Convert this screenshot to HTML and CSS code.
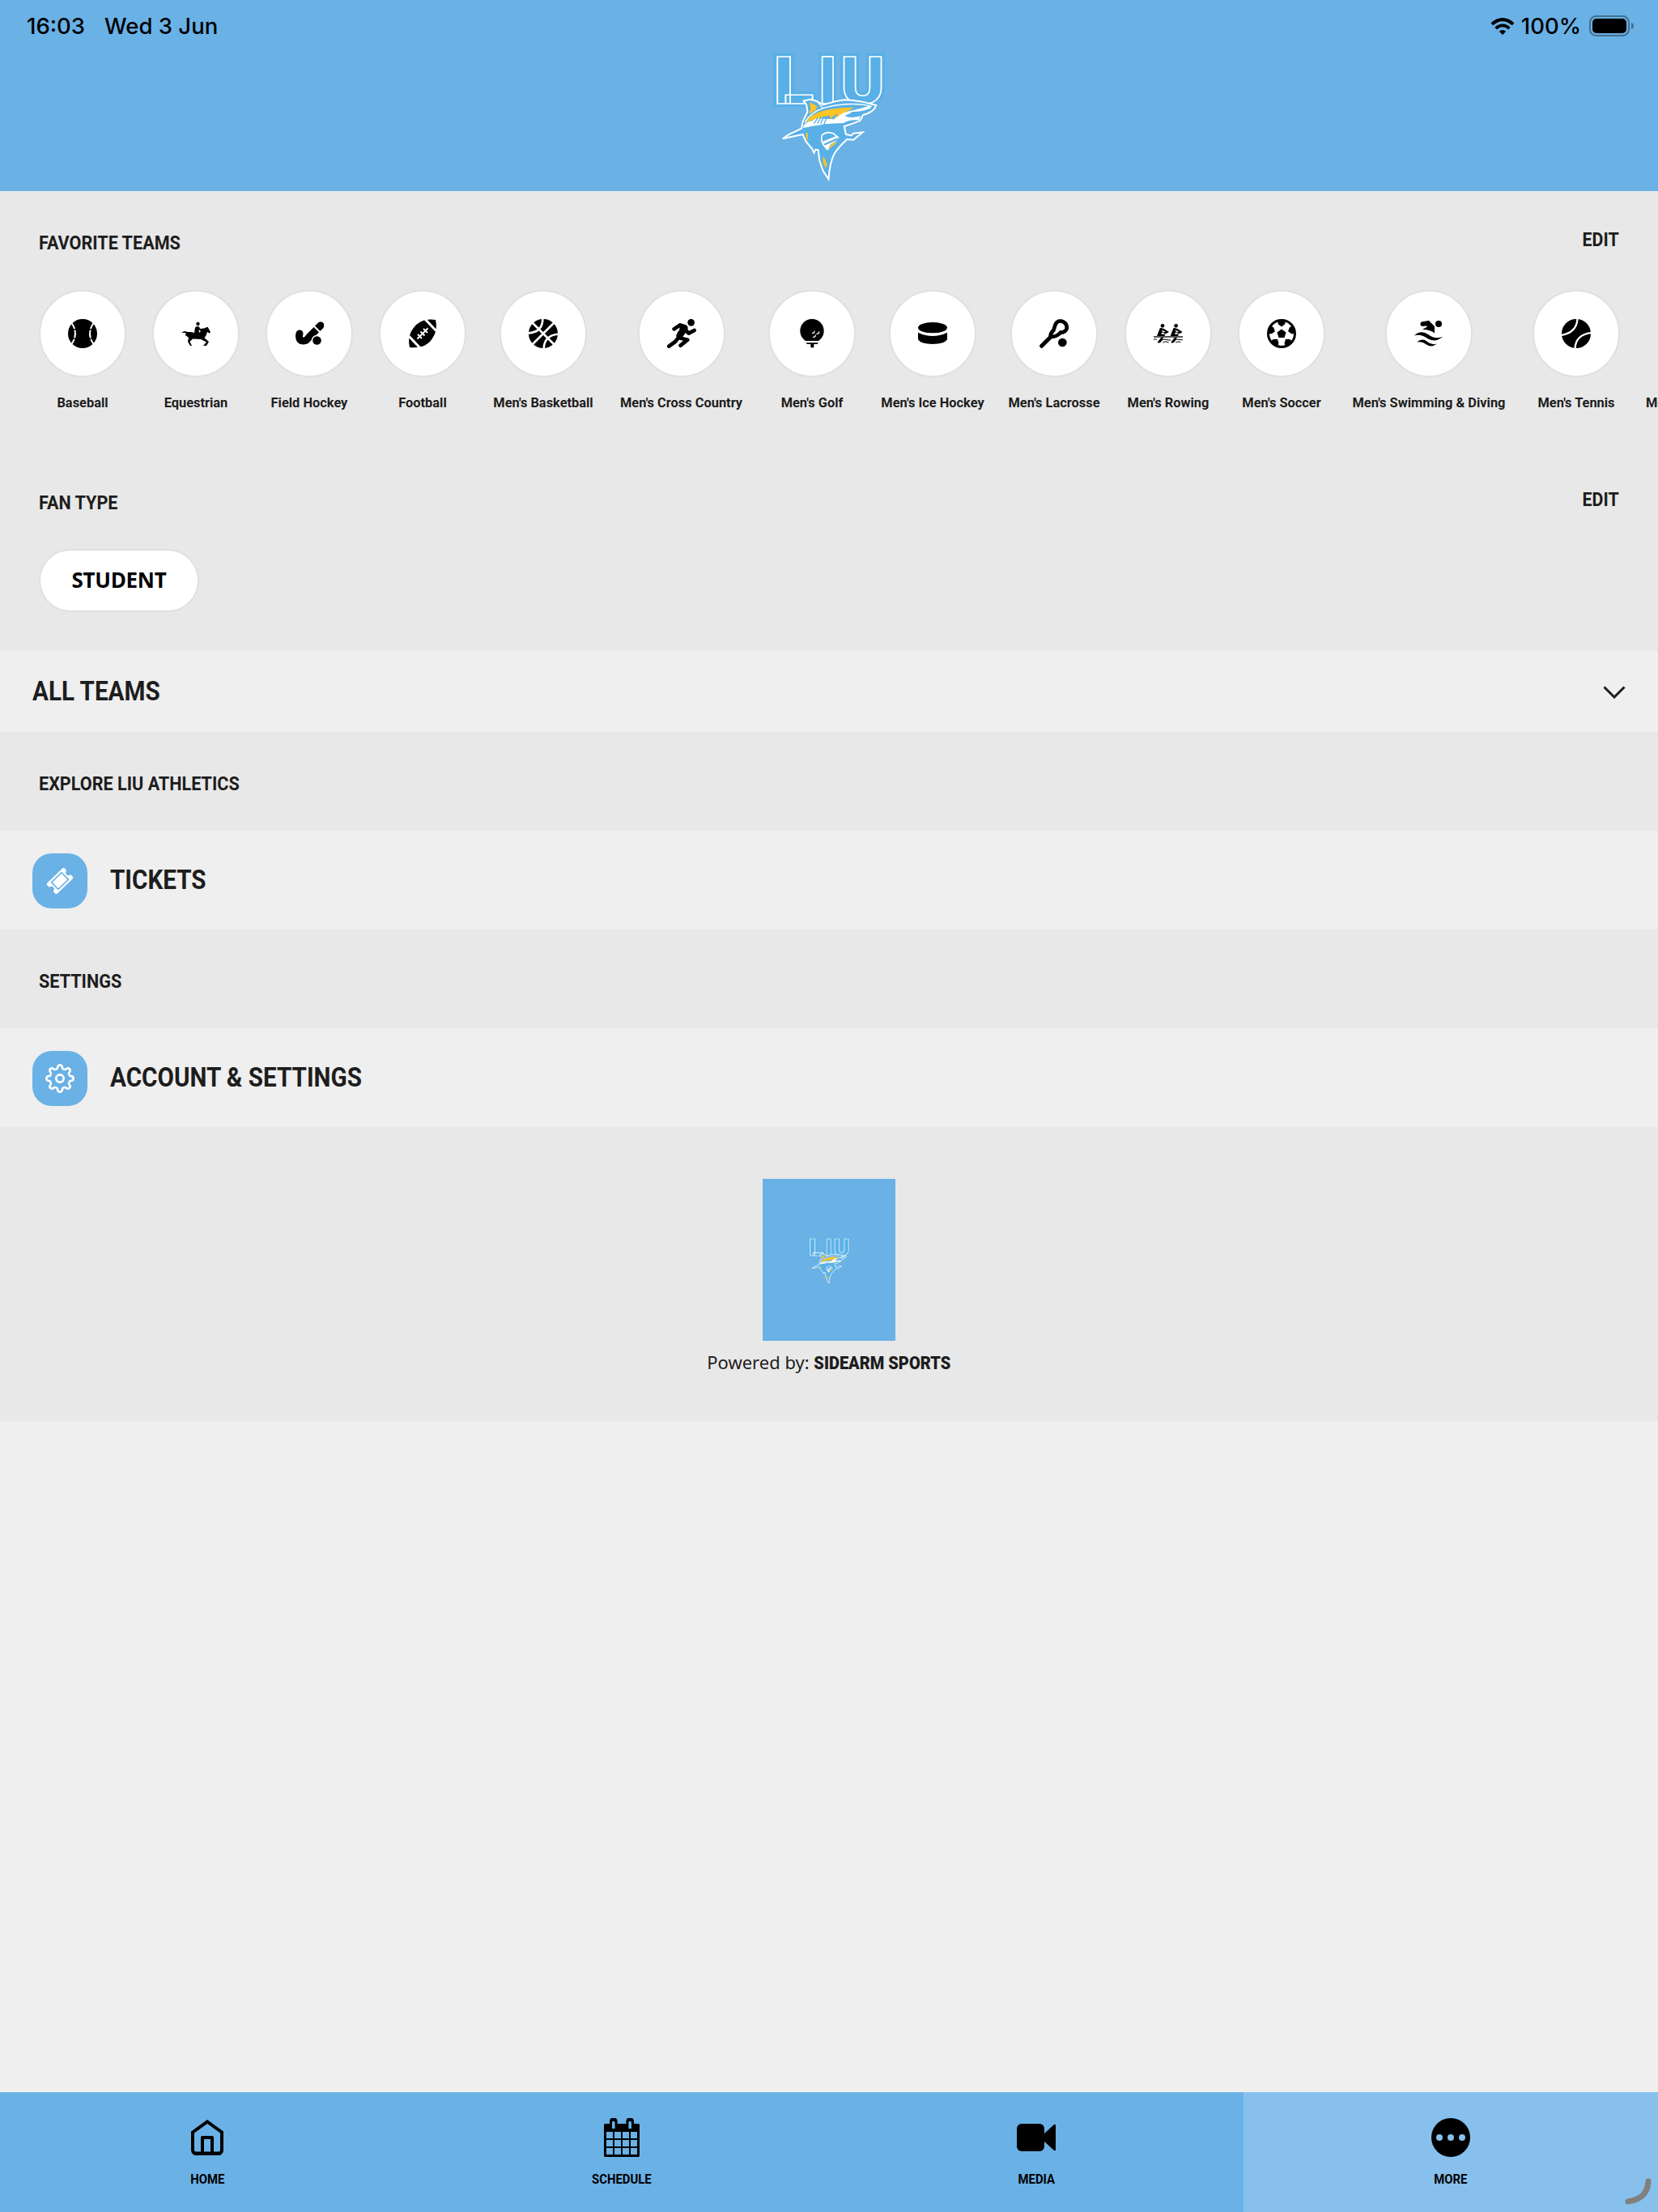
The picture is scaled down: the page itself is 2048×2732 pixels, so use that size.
FILE: index.html
```html
<!DOCTYPE html>
<html lang="en">
<head>
  <meta charset="UTF-8" />
  <title>LIU Athletics</title>
  <link rel="stylesheet" href="styles.css">
</head>
<body>
  <header class="header">
    <div class="status-bar">
      <span class="time">16:03</span>
      <span class="date">Wed 3 Jun</span>
      <svg class="wifi" viewBox="0 0 28 20">
        <path d="M1.5 7.5Q14 -3.500 26.500 7.500" fill="none" stroke="#000" stroke-width="3.800"/>
        <path d="M6 12.500Q14 5.500 22 12.500" fill="none" stroke="#000" stroke-width="3.500"/>
        <path d="M10 16Q14 12.500 18 16L14 20Z"/>
      </svg>
      <span class="percent">100%</span>
      <svg class="battery" viewBox="0 0 56 26">
        <rect x="1" y="1" width="48" height="24" rx="7.500" fill="none" stroke="#43708f" stroke-width="2"/>
        <rect x="4" y="4" width="42" height="18" rx="5"/>
        <path d="M52 9Q55 10 55 13T52 17Z" fill="#43708f"/>
      </svg>
    </div>
    <svg class="logo" viewBox="90 40 440 480">
      <g id="liu-logo">
        <g class="logo-halo">
          <text x="105" y="233" textLength="150" lengthAdjust="spacingAndGlyphs">L</text>
          <text x="271" y="233" textLength="71" lengthAdjust="spacingAndGlyphs">I</text>
          <text x="354" y="233" textLength="164" lengthAdjust="spacingAndGlyphs">U</text>
        </g>
        <g class="logo-letters">
          <text x="105" y="233" textLength="150" lengthAdjust="spacingAndGlyphs">L</text>
          <text x="271" y="233" textLength="71" lengthAdjust="spacingAndGlyphs">I</text>
          <text x="354" y="233" textLength="164" lengthAdjust="spacingAndGlyphs">U</text>
        </g>
        <!-- shark -->
        <path d="M217 222L240 216L264 222L290 236Q330 222 370 218Q430 222 462 232L486 238Q480 258 455 268L437 274L428 294L400 306L368 316L374 346L394 350L402 342L436 338L402 366L378 364Q345 395 331 418Q314 450 310 512L290 482L276 442L272 404L262 402L256 414L248 398L226 372L214 346L140 362L160 348L210 324L214 300L232 262L228 236Z" fill="#58b0e6" stroke="#fff" stroke-width="6"/>
        <path d="M240 226L268 242L262 256L238 270L243 250Z" fill="#ffc425"/>
        <path d="M222 302Q244 262 300 246Q370 228 440 236L470 242" fill="none" stroke="#fff" stroke-width="4"/>
        <path d="M268 224Q276 234 288 248" fill="none" stroke="#fff" stroke-width="4"/>
        <path d="M216 318Q224 298 250 296L262 286L330 290Q348 264 392 258Q432 250 462 240L468 248Q440 262 400 262L370 278Q390 288 428 278L424 292Q380 292 366 304Q290 304 216 322Z" fill="#fff"/>
        <path d="M226 302Q240 272 290 258Q340 246 402 246L388 256Q364 262 335 288L344 270Q330 272 318 290L314 276Q270 284 226 302Z" fill="#ffc425"/>
        <path d="M270 284L256 306M282 282L268 306M293 280L280 306M304 278L293 310" stroke="#58b0e6" stroke-width="4"/>
        <path d="M396 264L426 270M398 272L422 276" stroke="#58b0e6" stroke-width="3" stroke-dasharray="3 3"/>
        <path d="M425 242L440 243" stroke="#58b0e6" stroke-width="3"/>
        <path d="M226 338L234 344L232 366L238 374L228 364Z" fill="#ffc425"/>
        <path d="M308 404Q276 376 286 348Q306 332 330 344L348 360" fill="none" stroke="#fff" stroke-width="5"/>
        <path d="M288 372L338 352L344 358L290 382ZM294 388L346 364L316 384L308 404Z" fill="#fff"/>
        <path d="M310 404Q308 386 342 370Q334 386 320 392Z" fill="#ffc425"/>
        <path d="M288 428L298 440L304 458L300 472L290 452Z" fill="#ffc425"/>
      </g>
    </svg>
  </header>

  <section class="preferences">
    <div class="section-head">
      <h2>FAVORITE TEAMS</h2>
      <a class="edit">EDIT</a>
    </div>
    <div class="teams">
      <div class="team">
        <div class="circle">
          <svg viewBox="0 0 36 36">
            <circle cx="18" cy="18" r="18"/>
            <path d="M4.500 5Q13.500 18 4.500 31M31.500 5Q22.500 18 31.500 31" fill="none" stroke="#fff" stroke-width="2" stroke-dasharray="8 1.500 10 1.500 8"/>
          </svg>
        </div>
        <span>Baseball</span>
      </div>
      <div class="team">
        <div class="circle">
          <svg viewBox="0 0 36 36">
            <circle cx="20.500" cy="6" r="2.200"/>
            <path d="M0 16.500L4 15L8 16Q12 15.500 16 17L17 10.500Q19 8 22 9.500L23 12L28 11.500L32.500 9.800L36 16L35 17.800L31.800 16Q31 21 28.500 23.500L34 28L31 33H27L31 28.500L24 25L14 24.500L10.500 28L13 33H11L8 28L9 23L5 20L5.500 17L3 17Z"/>
            <path d="M21.500 13L24 15L22 17Z" fill="#fff"/>
          </svg>
        </div>
        <span>Equestrian</span>
      </div>
      <div class="team">
        <div class="circle">
          <svg viewBox="0 0 36 36">
            <path d="M6 18Q4 27 11 27Q15 27 18 22L32 8" fill="none" stroke="#000" stroke-width="9" stroke-linecap="round"/>
            <path d="M24 9L32 17" stroke="#fff" stroke-width="2.200"/>
            <circle cx="27.500" cy="26.500" r="6.800" fill="#fff"/>
            <circle cx="27.500" cy="26.500" r="5.300"/>
          </svg>
        </div>
        <span>Field Hockey</span>
      </div>
      <div class="team">
        <div class="circle">
          <svg viewBox="0 0 36 36">
            <path d="M34 1Q37 14 30 24Q22 37 2 35Q-1 22 6 12Q15 -2 34 1Z"/>
            <path d="M20 -1L37 17M-1 19L16 37" stroke="#fff" stroke-width="3"/>
            <path d="M11.500 24.500L24.500 11.500M12 19L17 24M15.500 15.500L20.500 20.500M19 12L24 17" stroke="#fff" stroke-width="1.900"/>
          </svg>
        </div>
        <span>Football</span>
      </div>
      <div class="team">
        <div class="circle">
          <svg viewBox="0 0 108 108">
            <circle cx="54" cy="54" r="54"/>
            <path d="M12 12L96 96M96 12L12 96M52 -2Q52 50 -2 52M56 110Q58 60 110 56" fill="none" stroke="#fff" stroke-width="8"/>
          </svg>
        </div>
        <span>Men's Basketball</span>
      </div>
      <div class="team">
        <div class="circle">
          <svg viewBox="0 0 108 108">
            <circle cx="89" cy="13" r="13"/>
            <path d="M26 37L48 22L64 28M68 40L80 53L101 42M44 70L76 77L50 98M40 72L30 84L7 101" fill="none" stroke="#000" stroke-width="14" stroke-linecap="round" stroke-linejoin="round"/>
            <path d="M46 16L70 22Q80 28 76 40L58 66Q46 82 34 66Q32 58 46 40Z"/>
          </svg>
        </div>
        <span>Men's Cross Country</span>
      </div>
      <div class="team">
        <div class="circle">
          <svg viewBox="0 0 108 108">
            <path d="M30 81A44 44 0 1 1 78 81ZM31 88H78L74 93H61V106H49V93H36Z"/>
            <path d="M54 52Q64 54 63 44M70 55Q81 56 80 46M57 67Q68 68 67 59" fill="none" stroke="#fff" stroke-width="4"/>
          </svg>
        </div>
        <span>Men's Golf</span>
      </div>
      <div class="team">
        <div class="circle">
          <svg viewBox="0 0 108 108">
            <ellipse cx="54" cy="32" rx="54" ry="20"/>
            <path d="M0 50Q54 76 108 50V76Q98 93 54 93Q10 93 0 76Z"/>
          </svg>
        </div>
        <span>Men's Ice Hockey</span>
      </div>
      <div class="team">
        <div class="circle">
          <svg viewBox="0 0 108 108">
            <path d="M8 100L44 64" stroke="#000" stroke-width="15" stroke-linecap="round"/>
            <path d="M42 66Q38 55 52 42Q56 30 59 20Q66 5 82 8Q103 14 101 35Q96 50 78 50Q64 66 42 66Z" fill="none" stroke="#000" stroke-width="14"/>
            <circle cx="85" cy="87" r="16"/>
          </svg>
        </div>
        <span>Men's Lacrosse</span>
      </div>
      <div class="team">
        <div class="circle">
          <svg viewBox="0 0 108 108">
            <g id="rower">
              <circle cx="33" cy="25" r="7"/>
              <path d="M24 32L38 36L57 48L46 55L30 50L28 56H44L28 84Q20 92 14 86L32 63H12Z"/>
              <path d="M30 42L44 46L34 50Z" fill="#fff"/>
            </g>
            <use href="#rower" x="50"/>
            <path d="M0 66H108" stroke="#555" stroke-width="6"/>
            <path d="M0 76Q6 73 12 76M30 78Q42 72 54 78H64M80 78Q88 72 96 77H108M34 87Q44 80 56 87M82 87Q90 81 100 86" fill="none" stroke="#000" stroke-width="3"/>
          </svg>
        </div>
        <span>Men's Rowing</span>
      </div>
      <div class="team">
        <div class="circle">
          <svg viewBox="0 0 36 36">
            <circle cx="18" cy="18" r="18"/>
            <circle cx="18" cy="18" r="15" fill="#fff"/>
            <path id="panel" d="M13 3.500L18 1L23 3.500L22 6.500L18 9.500L14 6.500Z"/>
            <use href="#panel" transform="rotate(72 18 18)"/>
            <use href="#panel" transform="rotate(144 18 18)"/>
            <use href="#panel" transform="rotate(216 18 18)"/>
            <use href="#panel" transform="rotate(288 18 18)"/>
            <path d="M18 12.500L23.500 16.500L21.500 23H14.500L12.500 16.500Z"/>
          </svg>
        </div>
        <span>Men's Soccer</span>
      </div>
      <div class="team">
        <div class="circle">
          <svg viewBox="0 0 36 36">
            <circle cx="30" cy="6" r="4"/>
            <path d="M9 3.500L18 2L25 9V17.500Q20 13 10 13L16 9.500L15 8.500L9 9Q5.500 6 9 3.500Z"/>
            <path d="M0 20.500Q8 13 17 19Q26 26 35.500 21.500Q27 29 18 25Q8 18 0 20.500ZM3 28.500Q10 23 16 28Q22 33 28 30.500Q21 36 15 31.500Q9 27 3 28.500Z"/>
          </svg>
        </div>
        <span>Men's Swimming &amp; Diving</span>
      </div>
      <div class="team">
        <div class="circle">
          <svg viewBox="0 0 36 36">
            <circle cx="18" cy="18" r="18"/>
            <path d="M19.500 -1Q19 17 -1 20M16.500 37Q17 19 37 17" fill="none" stroke="#fff" stroke-width="2.300"/>
          </svg>
        </div>
        <span>Men's Tennis</span>
      </div>
      <div class="team">
        <div class="circle"></div>
        <span>Men's Track &amp; Field</span>
      </div>
    </div>

    <div class="section-head fan-head">
      <h2>FAN TYPE</h2>
      <a class="edit">EDIT</a>
    </div>
    <div class="pill">STUDENT</div>
  </section>

  <div class="row all-teams">
    <span class="row-title">ALL TEAMS</span>
    <svg class="chevron" viewBox="0 0 28 16">
      <path d="M1.500 1.500L14 14L26.500 1.500" fill="none" stroke="#1d1d1d" stroke-width="3"/>
    </svg>
  </div>

  <div class="row-heading"><h2>EXPLORE LIU ATHLETICS</h2></div>
  <div class="row">
    <div class="row-icon">
      <svg viewBox="0 0 108 108">
        <g transform="rotate(-44 54 54)">
          <path d="M15 27H93Q99 27 99 33V43Q88 45 88 54T99 65V75Q99 81 93 81H15Q9 81 9 75V65Q20 63 20 54T9 43V33Q9 27 15 27Z" fill="#fff"/>
          <rect x="28" y="36" width="52" height="36" fill="none" stroke="#6ab1e6" stroke-width="5"/>
        </g>
      </svg>
    </div>
    <span class="row-title">TICKETS</span>
  </div>

  <div class="row-heading"><h2>SETTINGS</h2></div>
  <div class="row">
    <div class="row-icon">
      <svg viewBox="0 0 108 108" fill="none" stroke="#fff" stroke-width="8">
        <path id="tooth" d="M39.500 18.900Q45 19 46 10Q48 4 54 4Q60 4 62 10Q63 19 68.500 18.900"/>
        <use href="#tooth" transform="rotate(45 54 54)"/>
        <use href="#tooth" transform="rotate(90 54 54)"/>
        <use href="#tooth" transform="rotate(135 54 54)"/>
        <use href="#tooth" transform="rotate(180 54 54)"/>
        <use href="#tooth" transform="rotate(225 54 54)"/>
        <use href="#tooth" transform="rotate(270 54 54)"/>
        <use href="#tooth" transform="rotate(315 54 54)"/>
        <circle cx="54" cy="54" r="14"/>
      </svg>
    </div>
    <span class="row-title">ACCOUNT &amp; SETTINGS</span>
  </div>

  <section class="powered">
    <div class="powered-logo">
      <svg viewBox="90 40 440 480"><use href="#liu-logo"/></svg>
    </div>
    <p><span class="by">Powered by:</span> <b>SIDEARM SPORTS</b></p>
  </section>

  <nav class="tabs">
    <a class="tab">
      <svg class="home" viewBox="0 0 40 48">
        <path d="M2 17.500L20 4.500L38 17.500V39Q38 44 33 44H7Q2 44 2 39Z" fill="none" stroke="#000" stroke-width="4"/>
        <path d="M14 43V24H26V43M3 43.500H37" fill="none" stroke="#000" stroke-width="4" stroke-linejoin="round"/>
      </svg>
      <span>HOME</span>
    </a>
    <a class="tab">
      <svg class="calendar" viewBox="0 0 44 48">
        <path d="M1 7H7V4A4.800 4.800 0 0 1 16.600 4V7H27.400V4A4.800 4.800 0 0 1 37 4V7H43L44 8V47L43 48H1L0 47V8Z"/>
        <path d="M10 13V5.500A1.800 1.800 0 0 1 13.600 5.500V13ZM30.400 13V5.500A1.800 1.800 0 0 1 34 5.500V13ZM3 17H11V25H3ZM13 17H21V25H13ZM23 17H31V25H23ZM33 17H41V25H33ZM3 27H11V35H3ZM13 27H21V35H13ZM23 27H31V35H23ZM33 27H41V35H33ZM3 37H11V45H3ZM13 37H21V45H13ZM23 37H31V45H23ZM33 37H41V45H33Z" fill="#6ab1e6"/>
      </svg>
      <span>SCHEDULE</span>
    </a>
    <a class="tab">
      <svg class="media" viewBox="0 0 48 48">
        <rect y="7" width="34" height="34" rx="6"/>
        <path d="M33 20L46 8H48V40H46L33 28Z"/>
      </svg>
      <span>MEDIA</span>
    </a>
    <a class="tab active">
      <svg class="more" viewBox="0 0 48 48">
        <circle cx="24" cy="24" r="24"/>
        <g fill="#87c0ec">
          <circle cx="10" cy="24" r="4"/>
          <circle cx="24" cy="24" r="4"/>
          <circle cx="38" cy="24" r="4"/>
        </g>
      </svg>
      <span>MORE</span>
    </a>
    <svg class="corner" viewBox="0 0 34 34">
      <path d="M29 4Q28 26 4 29" fill="none" stroke="#808080" stroke-width="7" stroke-linecap="round"/>
    </svg>
  </nav>
</body>
</html>
```
FILE: styles.css
```css
* {
  box-sizing: border-box;
}
body {
  margin: 0;
  height: 2732px;
  display: flex;
  flex-direction: column;
  overflow: hidden;
  background-color: #efefef;
  color: #1d1d1d;
  font-family: Roboto, sans-serif;
  font-weight: 700;
}
svg {
  display: block;
  flex: none;
}
h2 {
  margin: 0;
  font-size: 24px;
  line-height: 32px;
  transform: scaleX(0.9);
  transform-origin: left;
}

/* Header */
.header {
  height: 236px;
  background-color: #6ab1e6;
}
.status-bar {
  display: flex;
  align-items: center;
  height: 64px;
  padding: 0 29px 0 33px;
  color: #000;
  font-family: Inter, sans-serif;
  font-size: 27.5px;
  font-weight: 500;
}
.date {
  margin-left: 24px;
  margin-right: auto;
}
.wifi {
  width: 30px;
  height: 21px;
}
.percent {
  margin: 0 10px 0 8px;
}
.battery {
  width: 56px;
  height: 26px;
}
.logo {
  width: 147px;
  height: 160px;
  margin: 0 auto;
  transform: translateX(-1px);
}
.logo-halo,
.logo-letters {
  font-family: Roboto, sans-serif;
  font-size: 242px;
  font-weight: 900;
  fill: #58b0e6;
}
.logo-halo {
  stroke: #58b0e6;
  stroke-width: 26px;
}
.logo-letters {
  stroke: #fff;
  stroke-width: 5px;
}

/* Favorite teams and fan type */
.preferences {
  height: 568px;
  padding: 44px 48px 0;
}
.section-head {
  display: flex;
  justify-content: space-between;
  height: 36px;
}
.section-head h2 {
  padding-top: 4px;
}
.edit {
  font-size: 24px;
  line-height: 32px;
  transform: scaleX(0.89);
  transform-origin: right;
}
.teams {
  display: grid;
  grid-template-columns: 108px 108px 108px 108px 126px 151px 108px 126px 110px 108px 108px 192px 108px max-content;
  column-gap: 32px;
  width: 2000px;
  margin-top: 42px;
  overflow: hidden;
}
.team {
  display: flex;
  flex-direction: column;
  align-items: center;
  gap: 20px;
  font-size: 16.4px;
  line-height: 24px;
  white-space: nowrap;
}
.circle {
  display: flex;
  flex: none;
  align-items: center;
  justify-content: center;
  width: 108px;
  height: 108px;
  border: 2px solid #e0e0e0;
  border-radius: 50%;
  background-color: #fff;
}
.circle svg {
  width: 36px;
  height: 36px;
}
.fan-head {
  margin-top: 91px;
}
.pill {
  width: 198px;
  height: 78px;
  margin-top: 41px;
  border: 2px solid #e0e0e0;
  border-radius: 39px;
  background-color: #fff;
  color: #000;
  font-family: "Open Sans", sans-serif;
  font-size: 26px;
  line-height: 72px;
  letter-spacing: -0.3px;
  text-align: center;
}

/* Rows */
.row {
  display: flex;
  align-items: center;
  height: 122px;
  padding: 0 40px;
}
.all-teams {
  justify-content: space-between;
  height: 100px;
}
.row-title {
  font-size: 32.5px;
  line-height: 40px;
  transform: scaleX(0.912);
  transform-origin: left;
}
.chevron {
  width: 28px;
  height: 16px;
  margin-top: 2px;
}
.row-heading {
  height: 122px;
  padding: 48px 48px 0;
}
.preferences,
.row-heading,
.powered {
  background-color: #e8e8e8;
}
.row-icon {
  display: flex;
  align-items: center;
  justify-content: center;
  width: 68px;
  height: 68px;
  margin: 2px 28px 0 0;
  border-radius: 24px;
  background-color: #6ab1e6;
}
.row-icon svg {
  width: 36px;
  height: 36px;
}

/* Powered by */
.powered {
  height: 363px;
  padding-top: 64px;
}
.powered-logo {
  display: flex;
  align-items: center;
  justify-content: center;
  width: 164px;
  height: 200px;
  margin: 0 auto;
  background-color: #6ab1e6;
}
.powered-logo svg {
  width: 54px;
  height: 59px;
}
.powered p {
  margin: 8px 0 0;
  font-size: 22px;
  line-height: 36px;
  text-align: center;
}
.powered b {
  display: inline-block;
  margin: 0 -8px;
  transform: scaleX(0.91);
}
.by {
  font-family: "Noto Sans", sans-serif;
  font-size: 22px;
  font-weight: 400;
}

/* Bottom tabs */
.tabs {
  position: relative;
  display: grid;
  grid-template-columns: repeat(4, 1fr);
  height: 148px;
  margin-top: auto;
  background-color: #6ab1e6;
}
.tab {
  display: flex;
  flex-direction: column;
  align-items: center;
  gap: 17px;
  padding-top: 32px;
  color: #000;
  font-size: 16.5px;
  line-height: 21px;
}
.tab span {
  transform: scaleX(0.9);
}
.tab svg {
  height: 48px;
}
.home {
  width: 40px;
}
.calendar {
  width: 44px;
}
.media,
.more {
  width: 48px;
}
.active {
  background-color: #87c0ec;
}
.corner {
  position: absolute;
  right: 7px;
  bottom: 8px;
  width: 34px;
  height: 34px;
}
```
